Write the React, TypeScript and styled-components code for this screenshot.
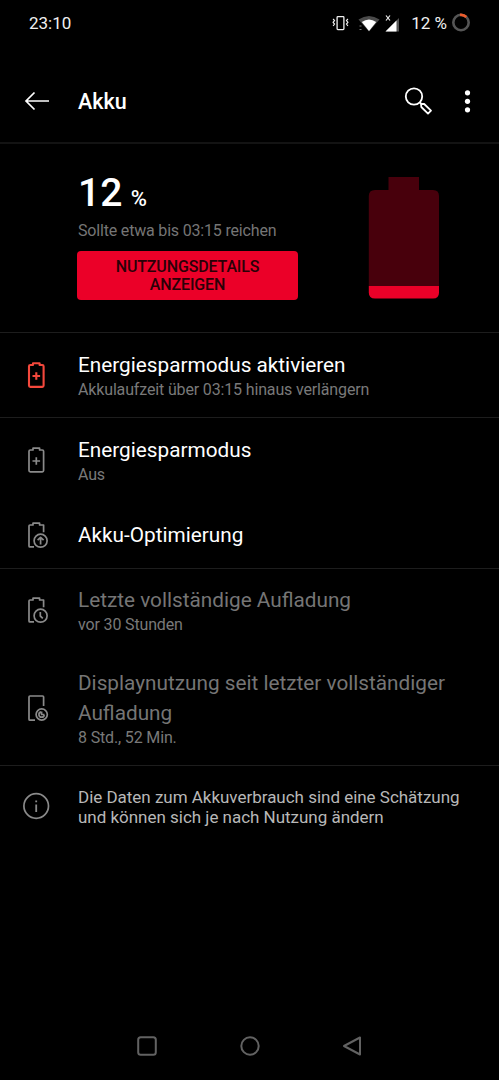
import React from "react";
import styled, { createGlobalStyle } from "styled-components";

const GlobalStyle = createGlobalStyle`
  * { box-sizing: border-box; }
  body { margin: 0; background: #000; }
`;

const Screen = styled.div`
  width: 499px;
  height: 1080px;
  display: flex;
  flex-direction: column;
  background: #000;
  color: #fff;
  font-family: Roboto, "Liberation Sans", sans-serif;
  overflow: hidden;
`;

const StatusBar = styled.div`
  height: 60px;
  padding: 0 28px 15px 29px;
  display: flex;
  align-items: center;
  justify-content: space-between;
  font-size: 17px;
  color: #f0f0f0;
`;

const StatusIcons = styled.div`
  display: flex;
  align-items: center;
  svg { display: block; }
`;

const StatusText = styled.span`
  margin: 0 4px 0 12px;
`;

const Header = styled.header`
  height: 84px;
  padding: 0 27px 0 20px;
  display: flex;
  align-items: center;
  border-bottom: 2px solid #131313;
  svg { display: block; }
`;

const Title = styled.h1`
  flex: 1;
  margin: 1px 0 0 26px;
  font-size: 21.5px;
  font-weight: 500;
  line-height: 30px;
`;

const HeaderActions = styled.div`
  display: flex;
  align-items: center;
  gap: 31px;
`;

const Hero = styled.section`
  height: 189px;
  padding: 26px 59px 0 77px;
  display: flex;
  justify-content: space-between;
  border-bottom: 1px solid #1d1d1d;
`;

const HeroInfo = styled.div`
  width: 222px;
`;

const Level = styled.div`
  height: 46px;
  line-height: 46px;
  font-size: 39px;
  font-weight: 500;
  padding-left: 1px;
  small { font-size: 22px; margin-left: 8.5px; }
`;

const Estimate = styled.div`
  margin: 4px 0 10px 1px;
  font-size: 16px;
  letter-spacing: -0.18px;
  line-height: 21px;
  color: #757575;
  white-space: nowrap;
`;

const DetailsButton = styled.button`
  display: block;
  width: 221px;
  height: 49px;
  padding: 1px 0 0;
  border: 0;
  border-radius: 4px;
  background: #eb0028;
  color: #2a0007;
  font: 500 16px/18px Roboto, sans-serif;
  letter-spacing: -0.15px;
`;

const BatteryGauge = styled.svg`
  display: block;
  margin-top: 7px;
`;

const Row = styled.div<{ $height: number; $divider?: boolean }>`
  height: ${(p) => p.$height}px;
  padding-left: 20px;
  display: flex;
  align-items: center;
  border-bottom: ${(p) => (p.$divider ? "1px solid #1d1d1d" : "0")};
`;

const RowIcon = styled.svg<{ $color: string; $weight?: number }>`
  display: block;
  width: 32px;
  height: 32px;
  flex: none;
  margin-right: 26px;
  fill: none;
  stroke: ${(p) => p.$color};
  stroke-width: ${(p) => p.$weight ?? 1.7};
  stroke-linejoin: round;
`;

const RowTitle = styled.div<{ $dim?: boolean }>`
  font-size: 20.75px;
  line-height: 30px;
  color: ${(p) => (p.$dim ? "#757575" : "#fff")};
`;

const RowSub = styled.div`
  font-size: 16px;
  letter-spacing: -0.15px;
  line-height: 20px;
  color: #797979;
`;

const Note = styled.p`
  margin: 2px 0 0;
  font-size: 17px;
  letter-spacing: -0.02px;
  line-height: 20px;
  color: #b8b8b8;
`;

const NavBar = styled.nav`
  margin-top: auto;
  height: 68px;
  padding: 0 136px;
  display: flex;
  align-items: center;
  justify-content: space-between;
  svg { display: block; fill: none; stroke: #626262; stroke-width: 2; }
`;

const GREY = "#8a8a8a";

const BatteryPlus = ({ color, bold }: { color: string; bold?: boolean }) => (
  <RowIcon $color={color} $weight={bold ? 2.1 : 1.7} viewBox="0 0 32 32">
    <path d="M13 6V4.200H19.600V6H22.300Q23.600 6 23.600 7.300V26.600Q23.600 27.900 22.300 27.900H10.300Q9 27.900 9 26.600V7.300Q9 6 10.300 6Z" />
    <path d="M16.300 13.200V20.800M12.500 17H20.100" />
  </RowIcon>
);

const BatteryBadge = ({ children }: { children: React.ReactNode }) => (
  <RowIcon $color={GREY} viewBox="0 0 32 32">
    <path d="M23.600 13.200V6H19.600V4.200H13V6H10Q9 6 9 7V26.900Q9 27.900 10 27.900H14" />
    <circle cx="20.600" cy="21.700" r="6.500" />
    {children}
  </RowIcon>
);

export default function App() {
  return (
    <Screen>
      <GlobalStyle />
      <StatusBar>
        <span>23:10</span>
        <StatusIcons>
          <svg width="68" height="24" viewBox="331.500 10 68 24" fill="none">
            <rect x="337.600" y="15.600" width="6.800" height="13" rx="0.800" stroke="#f0f0f0" strokeWidth="1.300" />
            <path d="M333.600 18l1.400 1.500-1.400 1.800 1.400 1.800-1.400 1.700M348.400 18l-1.400 1.500 1.400 1.800-1.400 1.800 1.400 1.700" stroke="#f0f0f0" strokeWidth="1.200" />
            <path d="M359 18.500Q369.500 11.500 380 18.500L369.500 30.500Z" fill="#4a4a4a" />
            <path d="M362.300 21Q369.500 16 376.700 21L369.500 30Z" fill="#fff" />
            <path d="M360 25h2M360 28.500h2" stroke="#777" />
            <path d="M386 30.500L401.500 15V30.500Z" fill="#555" />
            <path d="M386 30.500L397 19.500V30.500Z" fill="#fff" />
            <path d="M386.500 14.500l4 5M390.500 14.500l-4 5" stroke="#f0f0f0" strokeWidth="1.200" />
          </svg>
          <StatusText>12 %</StatusText>
          <svg width="20" height="20" viewBox="0 0 20 20" fill="none" strokeWidth="2.600">
            <circle cx="10" cy="9.500" r="7.700" stroke="#555" />
            <path d="M9 1.900A7.700 7.700 0 0 1 15.300 4" stroke="#ee5c2c" />
          </svg>
        </StatusIcons>
      </StatusBar>

      <Header>
        <svg width="32" height="32" viewBox="0 0 32 32" fill="none" stroke="#fff" strokeWidth="1.700">
          <path d="M29 16H6M14.500 7.500L6 16L14.500 24.500" />
        </svg>
        <Title>Akku</Title>
        <HeaderActions>
          <svg width="32" height="32" viewBox="0 0 32 32" fill="none" stroke="#fff" strokeWidth="1.800" strokeLinejoin="round">
            <circle cx="13" cy="11.500" r="8.200" />
            <path d="M18.800 17.300L20.500 19M20 18.800L23.200 19L30 25.700L27 28.600L20.300 22Z" />
          </svg>
          <svg width="8" height="32" viewBox="0 0 8 32" fill="#fff">
            <circle cx="3.500" cy="7.800" r="2.600" />
            <circle cx="3.500" cy="16.300" r="2.600" />
            <circle cx="3.500" cy="24.800" r="2.600" />
          </svg>
        </HeaderActions>
      </Header>

      <Hero>
        <HeroInfo>
          <Level>12<small>%</small></Level>
          <Estimate>Sollte etwa bis 03:15 reichen</Estimate>
          <DetailsButton>NUTZUNGSDETAILS<br />ANZEIGEN</DetailsButton>
        </HeroInfo>
        <BatteryGauge width="72" height="123" viewBox="0 0 72 123">
          <path d="M20.500 0H51V13H65Q71 13 71 19V109H0.800V19Q0.800 13 7 13H20.500Z" fill="#48000c" />
          <path d="M0.800 109H71V115.500Q71 121.500 65 121.500H7Q0.800 121.500 0.800 115.500Z" fill="#eb0028" />
        </BatteryGauge>
      </Hero>

      <Row $height={85} $divider>
        <BatteryPlus color="#f4483c" bold />
        <div>
          <RowTitle>Energiesparmodus aktivieren</RowTitle>
          <RowSub>Akkulaufzeit über 03:15 hinaus verlängern</RowSub>
        </div>
      </Row>
      <Row $height={84}>
        <BatteryPlus color={GREY} />
        <div>
          <RowTitle>Energiesparmodus</RowTitle>
          <RowSub>Aus</RowSub>
        </div>
      </Row>
      <Row $height={67} $divider>
        <BatteryBadge>
          <path d="M20.600 25.500V18.500M17.600 21.200L20.600 18.300L23.600 21.200" />
        </BatteryBadge>
        <RowTitle>Akku-Optimierung</RowTitle>
      </Row>
      <Row $height={82}>
        <BatteryBadge>
          <path d="M20.300 18V22L22.800 24.300" />
        </BatteryBadge>
        <div>
          <RowTitle $dim>Letzte vollständige Aufladung</RowTitle>
          <RowSub>vor 30 Stunden</RowSub>
        </div>
      </Row>
      <Row $height={115} $divider>
        <RowIcon $color={GREY} viewBox="0 0 32 32">
          <path d="M23.600 14V5Q23.600 4 22.600 4H10Q9 4 9 5V27.200Q9 28.200 10 28.200H15" />
          <circle cx="21.700" cy="22.500" r="5.600" />
          <path d="M21 19.900A2.700 2.700 0 1 0 24.300 23M21.600 19.500V22.500H24.500" />
        </RowIcon>
        <div>
          <RowTitle $dim>Displaynutzung seit letzter vollständiger<br />Aufladung</RowTitle>
          <RowSub>8 Std., 52 Min.</RowSub>
        </div>
      </Row>
      <Row $height={79}>
        <RowIcon $color={GREY} viewBox="0 0 32 32">
          <circle cx="16.200" cy="16" r="12.300" />
          <path d="M16.200 14.500V22M16.200 10.500V12.300" strokeWidth="1.800" />
        </RowIcon>
        <Note>Die Daten zum Akkuverbrauch sind eine Schätzung<br />und können sich je nach Nutzung ändern</Note>
      </Row>

      <NavBar>
        <svg width="22" height="22" viewBox="0 0 22 22"><rect x="2.200" y="2.200" width="17.600" height="17.600" rx="2.500" /></svg>
        <svg width="22" height="22" viewBox="0 0 22 22"><circle cx="11" cy="11" r="8.700" /></svg>
        <svg width="22" height="22" viewBox="0 0 22 22" strokeLinejoin="round"><path d="M19 2.500V19.500L3 11Z" /></svg>
      </NavBar>
    </Screen>
  );
}
